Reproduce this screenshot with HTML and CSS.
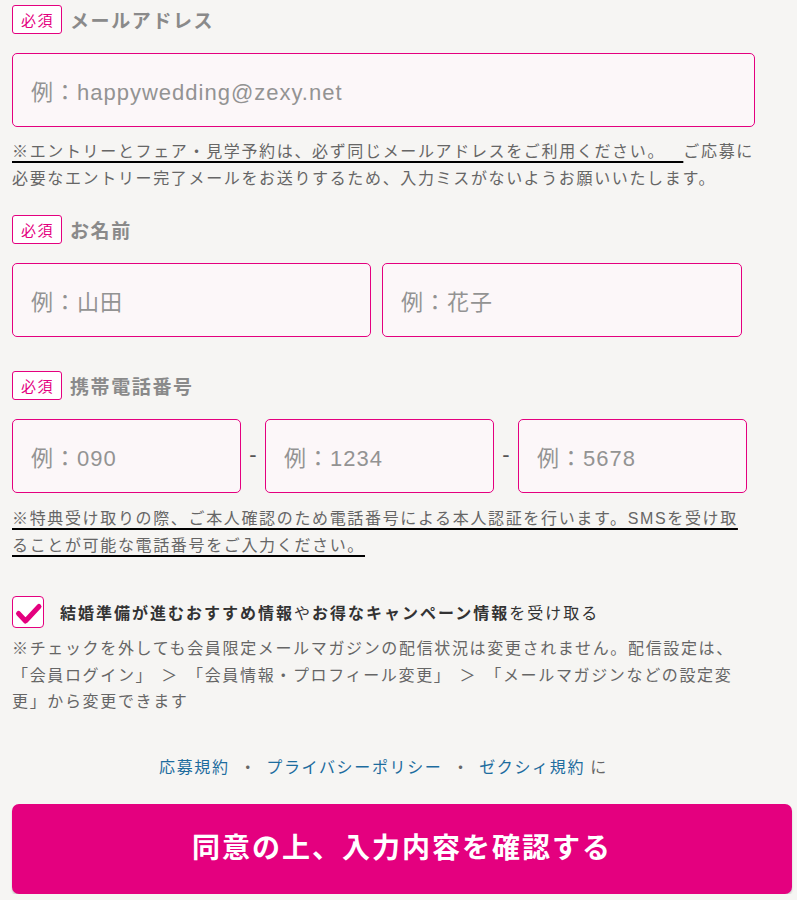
FILE: index.html
```html
<!DOCTYPE html>
<html lang="ja">
<head>
<meta charset="utf-8">
<title>エントリーフォーム</title>
<link rel="stylesheet" href="styles.css">
</head>
<body>
<main class="page">
  <form class="form">
    <section class="field field-first">
      <div class="field-head"><span class="req">必須</span><span class="field-label">メールアドレス</span></div>
      <input class="input input-wide" type="email" placeholder="例：happywedding@zexy.net">
      <p class="note note-email"><span class="ul">※エントリーとフェア・見学予約は、必ず同じメールアドレスをご利用ください。&nbsp;&nbsp;&nbsp;</span>ご応募に必要なエントリー完了メールをお送りするため、入力ミスがないようお願いいたします。</p>
    </section>

    <section class="field field-name">
      <div class="field-head"><span class="req">必須</span><span class="field-label">お名前</span></div>
      <div class="name-row">
        <input class="input" type="text" placeholder="例：山田">
        <input class="input" type="text" placeholder="例：花子">
      </div>
    </section>

    <section class="field field-tel">
      <div class="field-head"><span class="req">必須</span><span class="field-label">携帯電話番号</span></div>
      <div class="tel-row">
        <input class="input" type="tel" placeholder="例：090">
        <span class="dash">-</span>
        <input class="input" type="tel" placeholder="例：1234">
        <span class="dash">-</span>
        <input class="input" type="tel" placeholder="例：5678">
      </div>
      <p class="note note-tel"><span class="ul">※特典受け取りの際、ご本人確認のため電話番号による本人認証を行います。SMSを受け取ることが可能な電話番号をご入力ください。</span></p>
    </section>

    <section class="consent">
      <label class="check">
        <span class="check-box" role="checkbox" aria-checked="true">
          <svg width="30" height="30" viewBox="0 0 30 30"><path d="M5.5 16.5 L12.5 24 L26 9.5" fill="none" stroke="#e4007f" stroke-width="5" stroke-linecap="round" stroke-linejoin="round"/></svg>
        </span>
        <span class="check-text"><strong>結婚準備が進むおすすめ情報</strong>や<strong>お得なキャンペーン情報</strong>を受け取る</span>
      </label>
      <p class="note note-consent">※チェックを外しても会員限定メールマガジンの配信状況は変更されません。配信設定は、「会員ログイン」 ＞ 「会員情報・プロフィール変更」 ＞ 「メールマガジンなどの設定変更」から変更できます</p>
    </section>

    <p class="terms"><a href="#">応募規約</a><span class="sep">・</span><a href="#">プライバシーポリシー</a><span class="sep">・</span><a href="#">ゼクシィ規約</a> に</p>

    <button class="submit" type="button">同意の上、入力内容を確認する</button>
  </form>
</main>
</body>
</html>
```

FILE: styles.css
```css
html, body {
  margin: 0;
  padding: 0;
}

body {
  background: #f6f5f3;
  font-family: "Noto Sans CJK JP", sans-serif;
  color: #666;
  font-size: 16px;
  text-spacing-trim: space-all;
}

.page {
  padding: 5px 0 0 12px;
}

.form {
  display: flex;
  flex-direction: column;
  width: 780px;
}

.field {
  width: 743px;
  display: flex;
  flex-direction: column;
}

.field-name {
  margin-top: 23px;
}

.field-tel {
  margin-top: 34px;
}

.field-head {
  display: flex;
  align-items: center;
  gap: 8px;
  height: 29px;
  margin-bottom: 19px;
}

.req {
  box-sizing: border-box;
  width: 50px;
  height: 29px;
  border: 1px solid #e4007f;
  border-radius: 3px;
  background: #fff;
  color: #e4007f;
  font-size: 15px;
  letter-spacing: 1.5px;
  line-height: 27px;
  text-align: center;
  padding-left: 1px;
}

.field-label {
  font-size: 19px;
  font-weight: 700;
  color: #8a8a8a;
  letter-spacing: 1.6px;
  line-height: 29px;
}

.input {
  box-sizing: border-box;
  height: 74px;
  margin: 0;
  border: 1px solid #e4007f;
  border-radius: 5px;
  background: #fcf7f9;
  padding: 5px 18px 0;
  font-family: "Liberation Sans", "Noto Sans CJK JP", sans-serif;
  font-size: 22px;
  letter-spacing: 1px;
  color: #333;
  outline: none;
  min-width: 0;
  width: 100%;
}

.input::placeholder {
  color: #939393;
  opacity: 1;
}

.input-wide {
  width: 743px;
}

.name-row {
  display: grid;
  grid-template-columns: 359px 360px;
  gap: 11px;
}

.tel-row {
  display: grid;
  grid-template-columns: 229px 24px 229px 24px 229px;
  align-items: center;
}

.dash {
  text-align: center;
  font-family: "Liberation Sans", sans-serif;
  font-size: 22px;
  color: #555;
  padding-bottom: 2px;
}

.note {
  margin: 0;
  font-family: "Liberation Sans", "Noto Sans CJK JP", sans-serif;
  font-size: 16px;
  letter-spacing: 1.65px;
  line-height: 26.5px;
  color: #666;
}

.note-email {
  margin-top: 12px;
}

.note-tel {
  margin-top: 13px;
}

.ul {
  text-decoration: underline;
  text-decoration-color: #000;
  text-decoration-thickness: 2px;
  text-underline-offset: 4px;
}

.consent {
  margin-top: 37px;
  width: 743px;
}

.check {
  display: flex;
  align-items: center;
  gap: 16px;
  height: 32px;
}

.check-box {
  box-sizing: border-box;
  width: 32px;
  height: 32px;
  border: 1.5px solid #e4007f;
  border-radius: 4px;
  background: #fff;
  display: flex;
  align-items: center;
  justify-content: center;
  flex: none;
}

.check-box svg {
  display: block;
}

.check-text {
  font-size: 16px;
  letter-spacing: 2px;
  color: #333;
  line-height: 26px;
}

.check-text strong {
  font-weight: 700;
}

.note-consent {
  margin-top: 8px;
  word-spacing: 2px;
}

.terms {
  margin: 37px 0 0;
  width: 743px;
  text-align: center;
  font-size: 16px;
  letter-spacing: 1.65px;
  line-height: 26px;
  color: #666;
}

.terms a {
  color: #1d6c9e;
  text-decoration: none;
}

.sep {
  margin: 0 9px 0 10px;
  color: #666;
}

.submit {
  margin-top: 25px;
  width: 780px;
  height: 90px;
  border: none;
  border-radius: 7px;
  background: #e4007f;
  box-shadow: 0 2px 2px rgba(0, 0, 0, 0.18);
  color: #fff;
  font-family: "Noto Sans CJK JP", sans-serif;
  font-size: 28px;
  font-weight: 700;
  letter-spacing: 2px;
  padding: 0 0 5px;
  cursor: pointer;
}
```
